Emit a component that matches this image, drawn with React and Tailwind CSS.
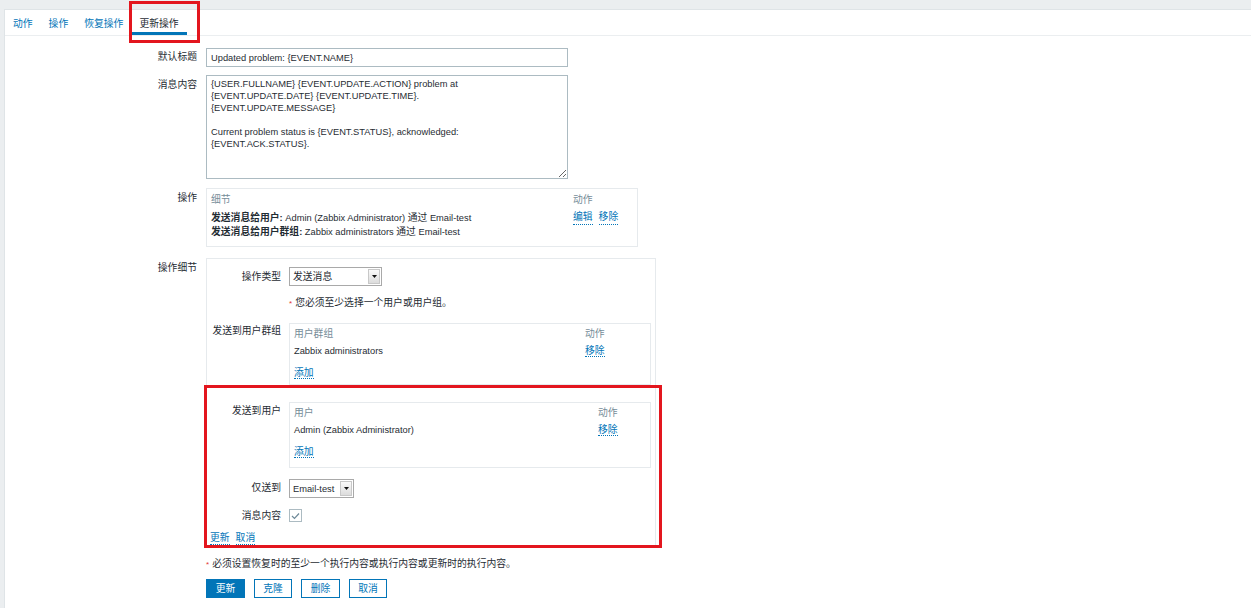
import React from "react";

const CJK = /([\u2E80-\u9FFF\u3000-\u303F\uFF00-\uFFEF]+)/;
function T({ s }) {
  const parts = s.split(CJK);
  return (
    <>
      {parts.map((p, i) =>
        CJK.test(p) ? (
          <span key={i} className="text-[9.8px]">
            {p}
          </span>
        ) : (
          <React.Fragment key={i}>{p}</React.Fragment>
        )
      )}
    </>
  );
}

function A({ s, className = "" }) {
  return (
    <span className={"text-[#0275b8] border-b border-dotted border-[#0275b8] leading-[12px] " + className}>
      <T s={s} />
    </span>
  );
}

function Select({ value, w }) {
  return (
    <div className={"flex h-[19px] border border-[#a9a9a9] bg-white " + w}>
      <div className="flex-1 pl-[3px] pt-[3px] leading-[12px]">
        <T s={value} />
      </div>
      <div className="w-[12px] my-[1px] mr-[1px] bg-gradient-to-b from-[#fafafa] to-[#dcdcdc] border border-[#c8c8c8] flex items-center justify-center">
        <svg width="5" height="3" viewBox="0 0 5 3">
          <path d="M0 0 L5 0 L2.5 3 Z" fill="#111" />
        </svg>
      </div>
    </div>
  );
}

function Row({ label, pt = "pt-[3px]", mt = "", children }) {
  return (
    <div className={"flex " + mt}>
      <div className={"w-[201px] shrink-0 pr-[9px] text-right leading-[12px] " + pt}>
        <T s={label} />
      </div>
      <div>{children}</div>
    </div>
  );
}

function IRow({ label, pt = "pt-[3px]", mt = "", children }) {
  return (
    <div className={"flex " + mt}>
      <div className={"w-[82px] shrink-0 pr-[8px] text-right leading-[12px] whitespace-nowrap " + pt}>
        <T s={label} />
      </div>
      <div>{children}</div>
    </div>
  );
}

export default function App() {
  const tabs = ["动作", "操作", "恢复操作", "更新操作"];
  const msg =
    "{USER.FULLNAME} {EVENT.UPDATE.ACTION} problem at\n{EVENT.UPDATE.DATE} {EVENT.UPDATE.TIME}.\n{EVENT.UPDATE.MESSAGE}\n\nCurrent problem status is {EVENT.STATUS}, acknowledged:\n{EVENT.ACK.STATUS}.";
  return (
    <div className="relative min-h-[608px] bg-[#ebeef0] pt-[9px] pl-[4px] font-['Liberation_Sans','Noto_Sans_CJK_SC',sans-serif] text-[9.3px] text-[#1f2c33] leading-[12px] overflow-hidden">
      <div className="bg-white border-l border-t border-[#dfe4e7] min-h-[599px]">
        {/* tabs */}
        <div className="flex h-[26px] border-b border-[#ebeef0]">
          {tabs.map((t, i) => (
            <div
              key={t}
              className={
                "px-[8px] pt-[8px] h-[25px] leading-[12px] " +
                (i === 3 ? "border-b-[3px] border-[#0275b8] text-[#1f2c33]" : "text-[#0275b8]")
              }
            >
              <T s={t} />
            </div>
          ))}
        </div>

        <div className="pt-[12px] pb-[10px]">
          <Row label="默认标题">
            <div className="w-[362px] h-[19px] border border-[#acbbc2] px-[4px] pt-[3px] leading-[12px]">
              Updated problem: {"{EVENT.NAME}"}
            </div>
          </Row>

          <Row label="消息内容" mt="mt-[8px]" pt="pt-[4px]">
            <textarea
              readOnly
              value={msg}
              className="block w-[362px] h-[104px] border border-[#acbbc2] px-[4px] pt-[2px] leading-[12px] text-[9.3px] text-[#1f2c33] outline-none"
            />
          </Row>

          <Row label="操作" mt="mt-[9px]" pt="pt-[4px]">
            <div className="w-[432px] h-[59px] border border-[#e6eaed] pl-[4px] pt-[5px]">
              <div className="grid grid-cols-[362px_1fr] text-[#768d99] leading-[12px] mb-[5px]">
                <div><T s="细节" /></div>
                <div><T s="动作" /></div>
              </div>
              <div className="grid grid-cols-[362px_1fr] leading-[13px]">
                <div className="whitespace-nowrap">
                  <b><T s="发送消息给用户:" /></b>
                  <T s=" Admin (Zabbix Administrator) 通过 Email-test" />
                </div>
                <div className="flex gap-[6px]">
                  <A s="编辑" />
                  <A s="移除" />
                </div>
                <div className="whitespace-nowrap">
                  <b><T s="发送消息给用户群组:" /></b>
                  <T s=" Zabbix administrators 通过 Email-test" />
                </div>
                <div />
              </div>
            </div>
          </Row>

          <Row label="操作细节" mt="mt-[11px]" pt="pt-[4px]">
            <div className="w-[450px] border border-[#e6eaed] pt-[8px] pb-[1px]">
              <IRow label="操作类型" pt="pt-[4px]">
                <Select value="发送消息" w="w-[93px]" />
              </IRow>
              <div className="flex mt-[11px]">
                <div className="w-[82px] shrink-0" />
                <div className="leading-[12px]">
                  <span className="text-[#e33734] mr-[3px] text-[8px]">*</span>
                  <T s="您必须至少选择一个用户或用户组。" />
                </div>
              </div>

              <IRow label="发送到用户群组" mt="mt-[13px]" pt="pt-[2px]">
                <div className="w-[362px] h-[62px] border border-[#e6eaed] pl-[4px] pt-[4px]">
                  <div className="grid grid-cols-[291px_1fr] leading-[12px]">
                    <div className="text-[#768d99]"><T s="用户群组" /></div>
                    <div className="text-[#768d99]"><T s="动作" /></div>
                    <div className="mt-[5px]">Zabbix administrators</div>
                    <div className="mt-[5px]"><A s="移除" /></div>
                  </div>
                  <div className="mt-[10px] leading-[12px]">
                    <A s="添加" />
                  </div>
                </div>
              </IRow>

              <IRow label="发送到用户" mt="mt-[17px]" pt="pt-[3px]">
                <div className="w-[362px] h-[66px] border border-[#e6eaed] pl-[4px] pt-[4px]">
                  <div className="grid grid-cols-[304px_1fr] leading-[12px]">
                    <div className="text-[#768d99]"><T s="用户" /></div>
                    <div className="text-[#768d99]"><T s="动作" /></div>
                    <div className="mt-[5px]">Admin (Zabbix Administrator)</div>
                    <div className="mt-[5px]"><A s="移除" /></div>
                  </div>
                  <div className="mt-[10px] leading-[12px]">
                    <A s="添加" />
                  </div>
                </div>
              </IRow>

              <IRow label="仅送到" mt="mt-[11px]" pt="pt-[3px]">
                <Select value="Email-test" w="w-[65px]" />
              </IRow>

              <IRow label="消息内容" mt="mt-[11px]" pt="pt-[1px]">
                <div className="w-[13px] h-[13px] border border-[#acbbc2] bg-white flex items-center justify-center">
                  <svg width="9" height="8" viewBox="0 0 9 8">
                    <path d="M1 4 L3.5 6.5 L8 1.5" fill="none" stroke="#6f8a99" strokeWidth="1.2" />
                  </svg>
                </div>
              </IRow>

              <div className="mt-[10px] pl-[3px] flex gap-[6px] leading-[12px]">
                <A s="更新" />
                <A s="取消" />
              </div>
            </div>
          </Row>

          <div className="pl-[201px] mt-[11px] leading-[12px]">
            <span className="text-[#e33734] mr-[3px] text-[8px]">*</span>
            <T s="必须设置恢复时的至少一个执行内容或执行内容或更新时的执行内容。" />
          </div>

          <div className="pl-[201px] mt-[8px] flex gap-[9px]">
            <button className="h-[19px] w-[39px] bg-[#0275b8] border border-[#0275b8] text-white leading-[12px] text-center">
              <T s="更新" />
            </button>
            <button className="h-[19px] w-[38px] bg-white border border-[#0275b8] text-[#0275b8] leading-[12px] text-center">
              <T s="克隆" />
            </button>
            <button className="h-[19px] w-[39px] bg-white border border-[#0275b8] text-[#0275b8] leading-[12px] text-center">
              <T s="删除" />
            </button>
            <button className="h-[19px] w-[38px] bg-white border border-[#0275b8] text-[#0275b8] leading-[12px] text-center">
              <T s="取消" />
            </button>
          </div>
        </div>
      </div>

      {/* annotation boxes */}
      <div className="absolute left-[129px] top-[1px] w-[71px] h-[42px] border-[3px] border-[#e3161e] pointer-events-none" />
      <div className="absolute left-[204px] top-[385px] w-[458px] h-[163px] border-[3px] border-[#e3161e] pointer-events-none" />
    </div>
  );
}
